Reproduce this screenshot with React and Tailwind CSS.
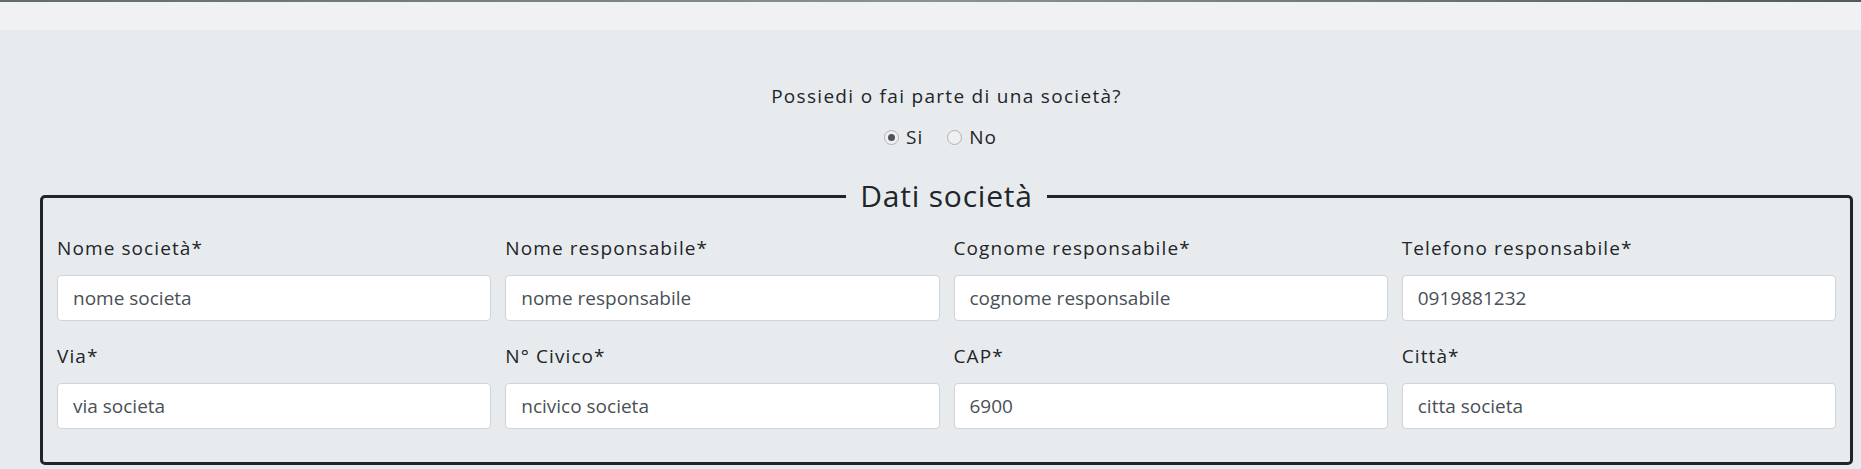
import { useState } from 'react';

const fields = [
    { label: 'Nome società*', value: 'nome societa' },
    { label: 'Nome responsabile*', value: 'nome responsabile' },
    { label: 'Cognome responsabile*', value: 'cognome responsabile' },
    { label: 'Telefono responsabile*', value: '0919881232' },
    { label: 'Via*', value: 'via societa' },
    { label: 'N° Civico*', value: 'ncivico societa' },
    { label: 'CAP*', value: '6900' },
    { label: 'Città*', value: 'citta societa' },
];

function Radio({ checked, label, onClick }) {
    return (
        <label className="flex items-center gap-[7px] cursor-pointer" onClick={onClick}>
            <span className="w-[15px] h-[15px] rounded-full border border-[#aeb2b8] bg-[#eef0f2] flex items-center justify-center">
                {checked && <span className="w-[7px] h-[7px] rounded-full bg-[#4f5356]" />}
            </span>
            <span>{label}</span>
        </label>
    );
}

export default function App() {
    const [hasCompany, setHasCompany] = useState(true);
    const [values, setValues] = useState(fields.map(f => f.value));

    return (
        <div className="min-h-screen bg-[#e8ebee] font-['Open_Sans',sans-serif] text-[#212529]">
            <div className="h-[2px] bg-gradient-to-r from-[#5f6b6c] via-[#8a9394] to-[#4f5a5b]" />
            <div className="h-[28px] bg-[#f0f1f3]" />

            <div className="pl-10 pr-2 pt-[52px]">
                <p className="text-center text-[19px] leading-[28px] tracking-[1.3px]">Possiedi o fai parte di una società?</p>
                <div className="flex justify-center gap-[24px] mt-[13px] pr-[12px] text-[19px] leading-[28px] tracking-[1px]">
                    <Radio checked={hasCompany} label="Si" onClick={() => setHasCompany(true)} />
                    <Radio checked={!hasCompany} label="No" onClick={() => setHasCompany(false)} />
                </div>

                <fieldset className="mt-[27px] border-[3px] border-[#212529] rounded-[5px] px-[14px] pt-[20px] pb-[33px]">
                    <legend className="mx-auto px-[14px] text-[30px] leading-[36px] tracking-[0.8px]">Dati società</legend>
                    <div className="grid grid-cols-4 gap-x-[14px] gap-y-[21px]">
                        {fields.map((f, i) => (
                            <div key={f.label} className="flex flex-col">
                                <label className="text-[19px] leading-[28px] tracking-[1.1px] mb-[13px]">{f.label}</label>
                                <input
                                    type="text"
                                    value={values[i]}
                                    onChange={e => setValues(values.map((v, j) => (j === i ? e.target.value : v)))}
                                    className="h-[46px] w-full bg-white border border-[#ced4da] rounded-[4px] px-[15px] text-[19px] text-[#495057] outline-none"
                                />
                            </div>
                        ))}
                    </div>
                </fieldset>
            </div>
        </div>
    );
}
